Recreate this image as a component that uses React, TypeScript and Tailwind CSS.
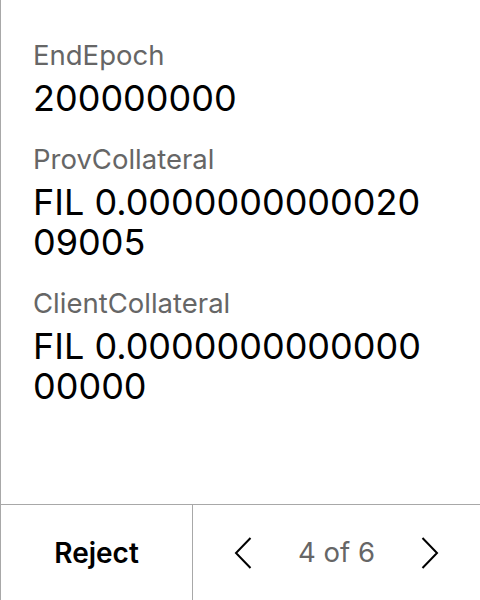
const fields = [
  { label: "EndEpoch", value: "200000000" },
  { label: "ProvCollateral", value: "FIL 0.000000000002009005" },
  { label: "ClientCollateral", value: "FIL 0.000000000000000000" },
];

function Chevron({ dir }: { dir: "left" | "right" }) {
  return (
    <svg width="18" height="32" viewBox="0 0 18 32" fill="none" stroke="black" strokeWidth="2">
      <polyline points={dir === "left" ? "16.5,1 2,16 16.5,31" : "1.5,1 16,16 1.5,31"} />
    </svg>
  );
}

export default function App() {
  return (
    <div
      className="flex h-[600px] w-[480px] flex-col border-l border-[#a8a8a8] bg-white"
      style={{ fontFamily: "Inter, 'Noto Sans', sans-serif" }}
    >
      <div className="flex-1 pl-[32px] pr-[45px] pt-[38px]">
        {fields.map((f) => (
          <div key={f.label} className="mb-[24px]">
            <div className="mb-[6px] text-[27.5px] leading-[34px] text-[#666666]">{f.label}</div>
            <div className="break-all text-[36px] leading-[40px] text-black">{f.value}</div>
          </div>
        ))}
      </div>

      {/* Footer actions */}
      <div className="flex h-[96px] border-t border-[#a8a8a8]">
        <button className="flex w-[192px] items-center justify-center border-r border-[#a8a8a8] text-[28px] font-semibold text-black">
          Reject
        </button>
        <div className="flex flex-1 items-center justify-center gap-[46px]">
          <Chevron dir="left" />
          <span className="text-[27.5px] text-[#666666]">4 of 6</span>
          <Chevron dir="right" />
        </div>
      </div>
    </div>
  );
}
